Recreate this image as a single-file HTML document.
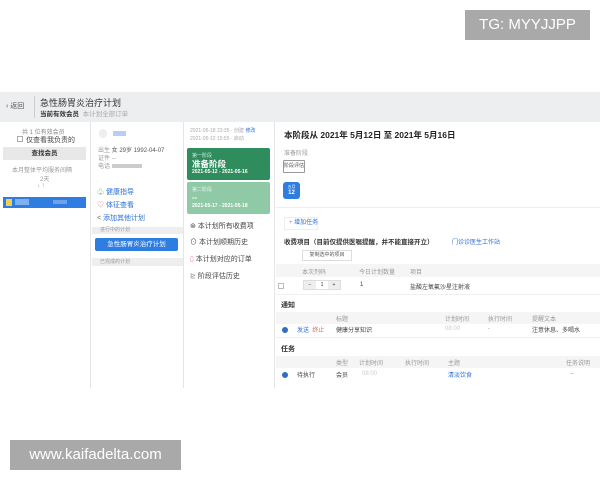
<!DOCTYPE html>
<html><head><meta charset="utf-8"><style>
*{margin:0;padding:0;box-sizing:border-box}
body{width:600px;height:480px;background:#fff;position:relative;overflow:hidden;font-family:"Liberation Sans","Noto Sans CJK SC",sans-serif;color:#333}
.a{position:absolute;white-space:nowrap}
.s{font-size:6px;color:#999}
.m{font-size:7px;color:#444}
.b{color:#2a6fd6}
</style></head><body>
<div class="a" style="left:0;top:92px;width:600px;height:30px;background:#eceef0"></div>
<div class="a m" style="left:6px;top:101px;font-size:7px;color:#555">‹ 返回</div>
<div class="a" style="left:34px;top:96px;width:1px;height:22px;background:#ccc"></div>
<div class="a" style="left:40px;top:96px;font-size:9px;color:#333">急性肠胃炎治疗计划</div>
<div class="a" style="left:40px;top:108px;font-size:6.5px;font-weight:bold;color:#333">当前有效会员 <span style="font-weight:normal;color:#aaa">&nbsp;本计划全部订单</span></div>
<div class="a" style="left:90px;top:122px;width:1px;height:266px;background:#e5e5e5"></div>
<div class="a" style="left:183px;top:122px;width:1px;height:266px;background:#e5e5e5"></div>
<div class="a" style="left:274px;top:122px;width:1px;height:266px;background:#e5e5e5"></div>
<!-- col1 -->
<div class="a s" style="left:22px;top:127px;color:#888">共 1 位有效会员</div>
<div class="a m" style="left:17px;top:135px"><span style="display:inline-block;width:6px;height:6px;border:1px solid #aaa;margin-right:3px"></span>仅查看我负责的</div>
<div class="a" style="left:3px;top:147px;width:83px;height:13px;background:#e8e8e8;font-size:6.5px;font-weight:bold;text-align:center;line-height:13px">查找会员</div>
<div class="a s" style="left:12px;top:165px">本月整体平均服务间隔</div>
<div class="a s" style="left:40px;top:174px">2天</div>
<div class="a s" style="left:37px;top:183px">↓ ↑</div>
<div class="a" style="left:3px;top:197px;width:83px;height:11px;background:#2f7de1"><span style="position:absolute;left:3px;top:2px;width:6px;height:7px;background:#f2d04a"></span><span style="position:absolute;left:12px;top:2px;width:14px;height:6px;background:#7fb0f0"></span><span style="position:absolute;left:50px;top:3px;width:14px;height:4px;background:#6ea3ea"></span></div>
<!-- col2 -->
<div class="a" style="left:99px;top:129px;width:8px;height:9px;border-radius:4px;background:#eee"></div>
<div class="a" style="left:113px;top:131px;width:13px;height:5px;background:#b9cff2"></div>
<div class="a s" style="left:98px;top:145px">出生 <span style="color:#555">女 29岁 1992-04-07</span></div>
<div class="a s" style="left:98px;top:153px">证件 --</div>
<div class="a s" style="left:98px;top:161px">电话 <span style="display:inline-block;width:30px;height:4px;background:#ccc"></span></div>
<div class="a m b" style="left:97px;top:187px"><span style="color:#6a6">♧</span> 健康指导</div>
<div class="a m b" style="left:97px;top:200px"><span style="color:#e77">♡</span> 体征查看</div>
<div class="a m b" style="left:97px;top:213px"><span style="color:#666">&lt;</span> 添加其他计划</div>
<div class="a s" style="left:92px;top:227px;width:91px;height:7px;background:#eee;padding-left:8px;font-size:5px;line-height:7px">进行中的计划</div>
<div class="a" style="left:95px;top:238px;width:83px;height:13px;background:#2f7de1;border-radius:2px;color:#fff;font-size:6.5px;text-align:center;line-height:13px">急性肠胃炎治疗计划</div>
<div class="a s" style="left:92px;top:258px;width:91px;height:8px;background:#eee;padding-left:8px;font-size:5px;line-height:8px">已完成的计划</div>
<!-- col3 -->
<div class="a" style="left:190px;top:127px;font-size:5px;color:#aaa">2021-05-18 23:35 · 创建 <span style="color:#2a6fd6">修改</span></div>
<div class="a" style="left:190px;top:135px;font-size:5px;color:#aaa">2021-05-12 15:55 · 启动</div>
<div class="a" style="left:187px;top:148px;width:83px;height:32px;background:#2f8c5c;border-radius:2px;color:#fff;padding:4px 5px">
<div style="font-size:5px;opacity:.8">第一阶段</div><div style="font-size:8.5px;font-weight:bold;line-height:10px">准备阶段</div><div style="font-size:5px;font-weight:bold">2021-05-12 - 2021-05-16</div></div>
<div class="a" style="left:187px;top:182px;width:83px;height:32px;background:#8fc9a6;border-radius:2px;color:#fff;padding:4px 5px">
<div style="font-size:5px;opacity:.8">第二阶段</div><div style="font-size:8px;font-weight:bold;line-height:10px">--</div><div style="font-size:5px;font-weight:bold">2021-05-17 - 2021-05-18</div></div>
<div class="a m" style="left:190px;top:221px">⊛ 本计划所有收费项</div>
<div class="a m" style="left:190px;top:237px">⊙ 本计划顺期历史</div>
<div class="a m" style="left:190px;top:254px"><span style="color:#e77">▯</span> 本计划对应的订单</div>
<div class="a m" style="left:190px;top:271px"><span style="color:#888">⊵</span> 阶段评估历史</div>
<!-- main -->
<div class="a" style="left:284px;top:129px;font-size:8.5px;font-weight:bold;color:#222">本阶段从 2021年 5月12日 至 2021年 5月16日</div>
<div class="a s" style="left:284px;top:148px">准备阶段</div>
<div class="a" style="left:283px;top:160px;width:22px;height:13px;border:1px solid #999;border-radius:1px;font-size:5px;line-height:11px;text-align:center;color:#555">阶段评估</div>
<div class="a" style="left:283px;top:182px;width:17px;height:17px;background:#2f7de1;border-radius:3px;color:#fff;text-align:center;font-size:4px;line-height:6px;padding-top:2px">五月<br><span style="font-size:6px;font-weight:bold">12</span></div>
<div class="a" style="left:276px;top:207px;width:324px;height:1px;background:#eee"></div>
<div class="a" style="left:284px;top:217px;width:34px;height:13px;border:1px solid #eee;font-size:6px;line-height:11px;padding-left:4px;color:#2a6fd6"><span style="color:#999">+</span> 增加任务</div>
<div class="a" style="left:284px;top:236px;font-size:6.5px;font-weight:bold;color:#333">收费项目（目前仅提供医嘱提醒，并不能直接开立）</div>
<div class="a" style="left:452px;top:237px;font-size:6px;color:#2a6fd6">门诊诊医生工作站</div>
<div class="a" style="left:302px;top:250px;width:50px;height:11px;border:1px solid #ddd;font-size:5px;line-height:9px;text-align:center;color:#555">复制选中的项目</div>
<div class="a" style="left:276px;top:264px;width:324px;height:13px;background:#f5f5f5"></div>
<div class="a s" style="left:302px;top:267px">本次剂码</div><div class="a s" style="left:359px;top:267px">今日计划数量</div><div class="a s" style="left:410px;top:267px">项目</div>
<div class="a" style="left:278px;top:283px;width:6px;height:6px;border:1px solid #bbb"></div>
<div class="a" style="left:303px;top:280px;width:38px;height:10px;border:1px solid #ddd;font-size:5px;line-height:8px"><span style="display:inline-block;width:12px;text-align:center;background:#eee">−</span><span style="display:inline-block;width:12px;text-align:center">1</span><span style="display:inline-block;width:12px;text-align:center;background:#eee">+</span></div>
<div class="a s" style="left:360px;top:282px;color:#444">1</div>
<div class="a s" style="left:410px;top:282px;color:#444">盐酸左氧氟沙星注射液</div>
<div class="a" style="left:276px;top:294px;width:324px;height:1px;background:#f0f0f0"></div>
<div class="a" style="left:281px;top:300px;font-size:7px;font-weight:bold">通知</div>
<div class="a" style="left:276px;top:312px;width:324px;height:12px;background:#f5f5f5"></div>
<div class="a s" style="left:336px;top:314px">标题</div><div class="a s" style="left:445px;top:314px">计划时间</div><div class="a s" style="left:488px;top:314px">执行时间</div><div class="a s" style="left:532px;top:314px">提醒文本</div>
<div class="a" style="left:282px;top:327px;width:6px;height:6px;border-radius:3px;background:#2f6fc0"></div>
<div class="a" style="left:297px;top:325px;font-size:6px;color:#2a6fd6">发送 <span style="color:#d66">&nbsp;终止</span></div>
<div class="a m" style="left:336px;top:325px;font-size:6px">健康分享知识</div>
<div class="a s" style="left:445px;top:326px;color:#ccc">08:00</div><div class="a s" style="left:488px;top:326px">-</div>
<div class="a m" style="left:532px;top:325px;font-size:6px">注意休息、多喝水</div>
<div class="a" style="left:276px;top:337px;width:324px;height:1px;background:#f0f0f0"></div>
<div class="a" style="left:281px;top:344px;font-size:7px;font-weight:bold">任务</div>
<div class="a" style="left:276px;top:356px;width:324px;height:12px;background:#f5f5f5"></div>
<div class="a s" style="left:336px;top:358px">类型</div><div class="a s" style="left:359px;top:358px">计划时间</div><div class="a s" style="left:405px;top:358px">执行时间</div><div class="a s" style="left:448px;top:358px">主题</div><div class="a s" style="left:566px;top:358px">任务说明</div>
<div class="a" style="left:282px;top:372px;width:6px;height:6px;border-radius:3px;background:#2f6fc0"></div>
<div class="a m" style="left:297px;top:370px;font-size:6px">待执行</div>
<div class="a m" style="left:336px;top:370px;font-size:6px">会员</div>
<div class="a s" style="left:362px;top:371px;color:#ccc">08:00</div>
<div class="a" style="left:448px;top:370px;font-size:6px;color:#2a6fd6">清淡饮食</div>
<div class="a s" style="left:570px;top:371px">--</div>
<div class="a" style="left:465px;top:10px;width:125px;height:30px;background:#a9a9a9;color:#fff;font-size:15px;line-height:30px;text-align:center">TG: MYYJJPP</div>
<div class="a" style="left:10px;top:440px;width:171px;height:30px;background:#a9a9a9;color:#fff;font-size:15px;line-height:30px;text-align:center">www.kaifadelta.com</div>
</body></html>
